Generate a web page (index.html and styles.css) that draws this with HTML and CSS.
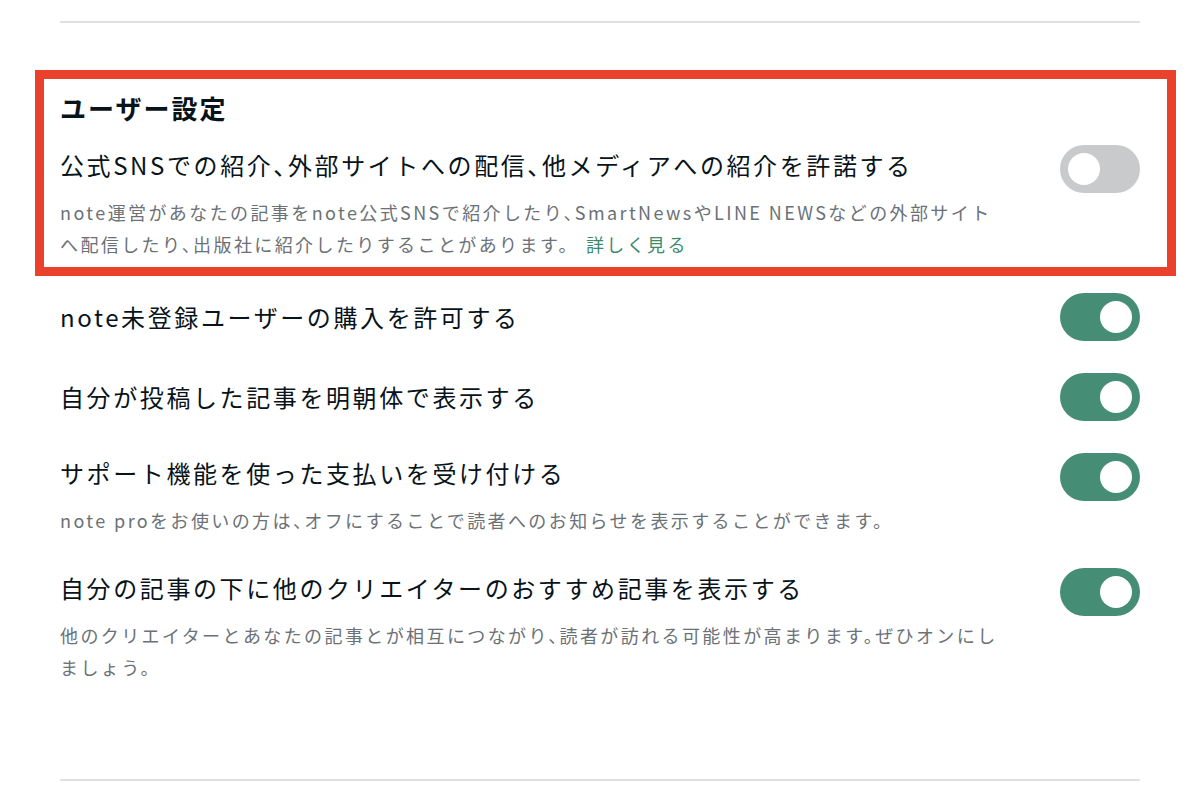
FILE: index.html
```html
<!DOCTYPE html>
<html lang="ja">
<head>
    <meta charset="UTF-8">
    <meta name="viewport" content="width=device-width, initial-scale=1.0">
    <title>ユーザー設定</title>
    <link rel="stylesheet" href="styles.css">
</head>
<body>
    <div class="settings">
        <hr class="rule">

        <!-- 注目エリア -->
        <section class="highlight">
            <h2 class="section-title">ユーザー設定</h2>
            <div class="setting-row">
                <div class="setting-text">
                    <div class="setting-label">公式SNSでの紹介、外部サイトへの配信、他メディアへの紹介を許諾する</div>
                    <p class="setting-desc">note運営があなたの記事をnote公式SNSで紹介したり、SmartNewsやLINE NEWSなどの外部サイトへ配信したり、出版社に紹介したりすることがあります。<a href="#" class="setting-link">詳しく見る</a></p>
                </div>
                <span class="toggle"><span class="toggle-knob"></span></span>
            </div>
        </section>

        <div class="setting-list">
            <div class="setting-row is-single">
                <div class="setting-text">
                    <div class="setting-label">note未登録ユーザーの購入を許可する</div>
                </div>
                <span class="toggle is-on"><span class="toggle-knob"></span></span>
            </div>
            <div class="setting-row is-single">
                <div class="setting-text">
                    <div class="setting-label">自分が投稿した記事を明朝体で表示する</div>
                </div>
                <span class="toggle is-on"><span class="toggle-knob"></span></span>
            </div>
            <div class="setting-row">
                <div class="setting-text">
                    <div class="setting-label">サポート機能を使った支払いを受け付ける</div>
                    <p class="setting-desc">note proをお使いの方は、オフにすることで読者へのお知らせを表示することができます。</p>
                </div>
                <span class="toggle is-on"><span class="toggle-knob"></span></span>
            </div>
            <div class="setting-row">
                <div class="setting-text">
                    <div class="setting-label">自分の記事の下に他のクリエイターのおすすめ記事を表示する</div>
                    <p class="setting-desc">他のクリエイターとあなたの記事とが相互につながり、読者が訪れる可能性が高まります。ぜひオンにしましょう。</p>
                </div>
                <span class="toggle is-on"><span class="toggle-knob"></span></span>
            </div>
        </div>

        <hr class="rule rule-bottom">
    </div>
</body>
</html>
```

FILE: styles.css
```css
body {
    margin: 0;
    padding: 0;
    font-family: "Noto Sans CJK JP", "Noto Sans", sans-serif;
    font-feature-settings: "halt";
    background-color: #fff;
    color: #08131a;
}
.settings {
    width: 1080px;
    margin-left: 60px;
    padding-top: 21px;
}
.rule {
    margin: 0;
    border: 0;
    height: 2px;
    background-color: #e0e0e0;
}
.rule-bottom {
    margin-top: 96px;
}

/* 赤枠 */
.highlight {
    margin: 47px -36px 0 -25px;
    border: 9px solid #e9412b;
    padding: 11px 27px 7px 16px;
}
.section-title {
    margin: 0 0 19px 0;
    font-size: 26px;
    line-height: 36px;
    font-weight: 700;
    letter-spacing: 2px;
}

.setting-list {
    margin-top: 17px;
    display: flex;
    flex-direction: column;
    gap: 32px;
}
.setting-row {
    display: flex;
    align-items: flex-start;
    gap: 54px;
}
.setting-row.is-single {
    align-items: center;
}
.setting-text {
    flex: 1;
    min-width: 0;
}
.setting-label {
    font-size: 24px;
    line-height: 40px;
    letter-spacing: 2.6px;
}
.setting-desc {
    margin: 11px 0 0 0;
    font-size: 18px;
    line-height: 32px;
    letter-spacing: 2.4px;
    color: #6b7177;
}
.setting-link {
    margin-left: 16px;
    color: #3c8a6e;
    text-decoration: none;
}

/* トグル */
.toggle {
    flex: none;
    width: 80px;
    height: 48px;
    box-sizing: border-box;
    padding: 0 8px;
    border-radius: 24px;
    background-color: #c9cacb;
    display: flex;
    align-items: center;
    justify-content: flex-start;
}
.toggle.is-on {
    background-color: #468d75;
    justify-content: flex-end;
}
.toggle-knob {
    width: 32px;
    height: 32px;
    border-radius: 50%;
    background-color: #fff;
}
```
